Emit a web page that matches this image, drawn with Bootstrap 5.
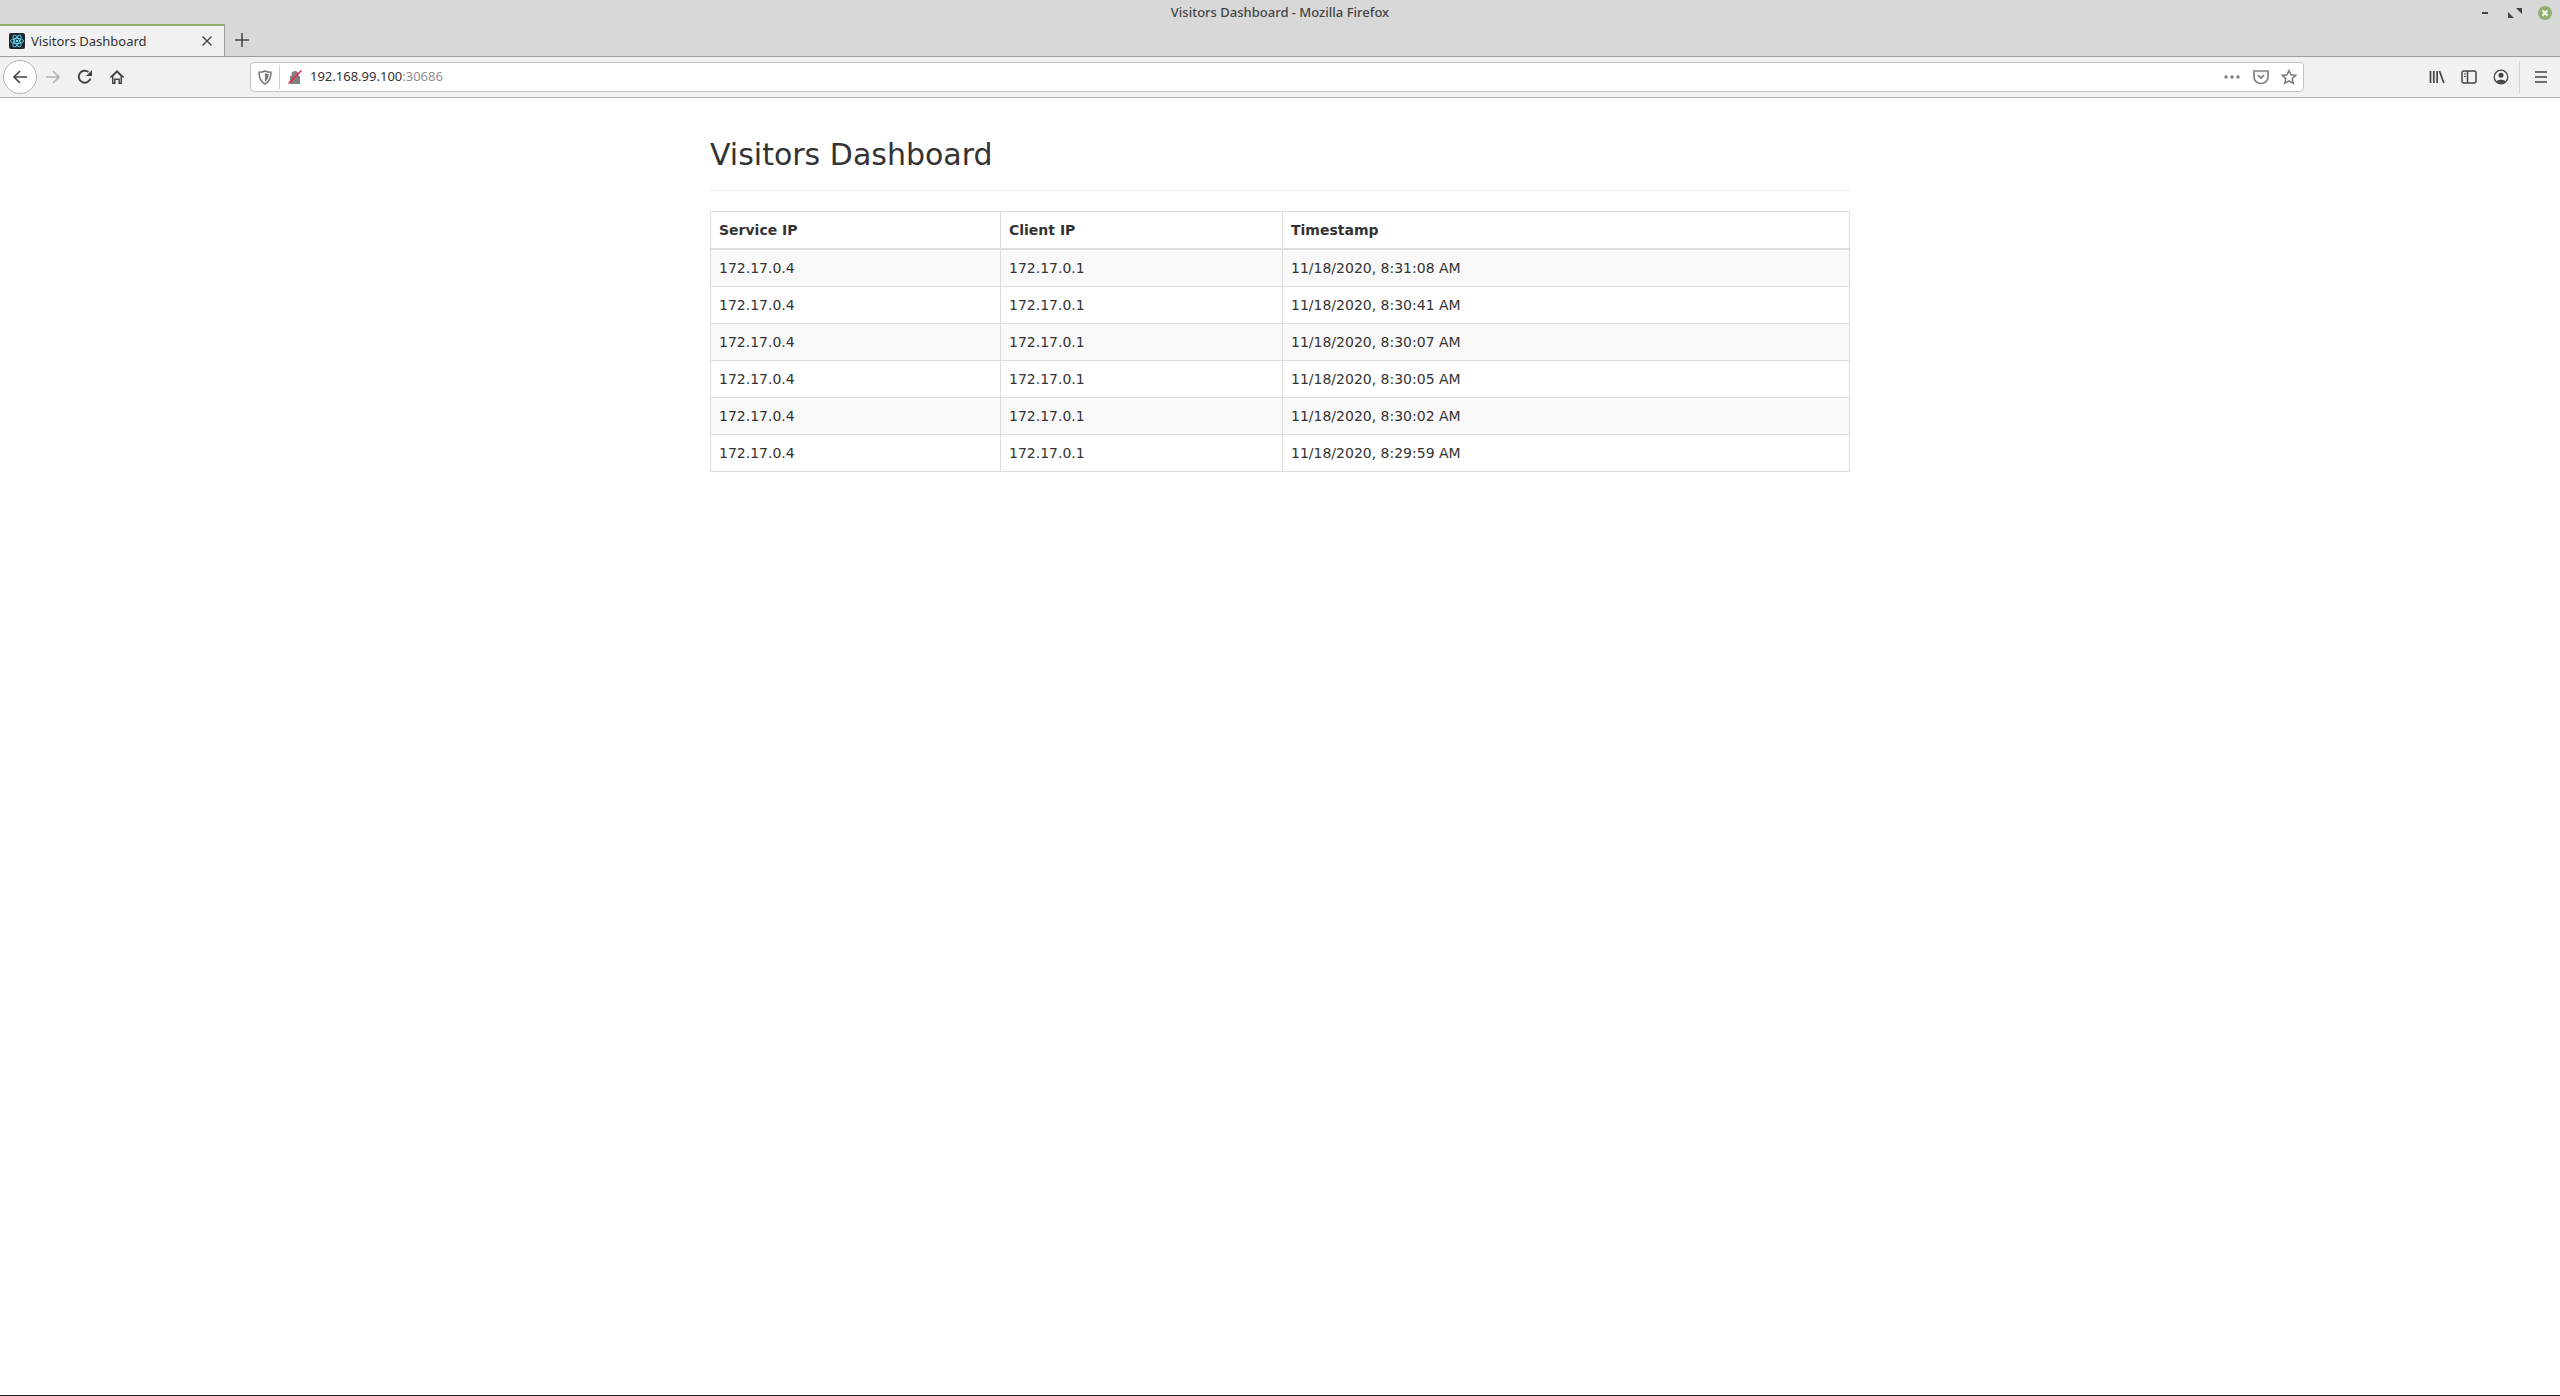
<!DOCTYPE html>
<html lang="en">
<head>
    <meta charset="UTF-8">
    <meta name="viewport" content="width=device-width, initial-scale=1.0">
    <title>Visitors Dashboard</title>
    <link href="https://cdn.jsdelivr.net/npm/bootstrap@5.3.0/dist/css/bootstrap.min.css" rel="stylesheet">
    <style>
        html, body { height: 100%; }
        body { font-family: "DejaVu Sans", sans-serif; font-size: 14px; color: #333; background: #fff; }

        /* browser window */
        .win-top { background: #d8d8d8; height: 57px; border-bottom: 1px solid #9d9d9d; flex: none; }
        .win-title-row { height: 24px; padding-top: 2px; display: grid; grid-template-columns: 1fr auto 1fr; align-items: center; }
        .win-title { font-family: "Noto Sans", sans-serif; font-size: 13px; font-weight: 500; color: #444; }
        .win-ctrls { justify-self: end; display: flex; align-items: center; gap: 14px; padding-right: 8px; }
        .win-ctrls svg { display: block; }
        .tab-row { height: 32px; display: flex; align-items: flex-start; }
        .tab-active { width: 225px; height: 32px; background: #f1f1f1; border-top: 2px solid #8fb06f; border-right: 1px solid #9d9d9d; display: flex; align-items: center; padding: 0 11px 0 9px; gap: 6px; }
        .tab-label { font-family: "Noto Sans", sans-serif; font-size: 13px; color: #333; flex-grow: 1; white-space: nowrap; padding-top: 1px; }
        .tab-plus { width: 33px; height: 32px; display: flex; align-items: center; justify-content: center; }
        .tool-row { background: #f1f1f1; height: 41px; border-bottom: 1px solid #b6b6b6; flex: none; display: flex; align-items: center; padding: 0 3px; }
        .back-btn { width: 34px; height: 34px; border-radius: 50%; background: #fff; border: 1px solid #b3b3b3; display: flex; align-items: center; justify-content: center; flex: none; }
        .tool-btn { width: 32px; height: 32px; display: flex; align-items: center; justify-content: center; flex: none; }
        .url-bar { flex-grow: 1; height: 30px; background: #fff; border: 1px solid #c4c4c4; border-radius: 4px; margin-left: 117px; margin-right: 117px; display: flex; align-items: center; }
        .url-seg { width: 29px; height: 24px; border-right: 1px solid #d0d0d0; display: flex; align-items: center; justify-content: center; flex: none; }
        .url-text { font-family: "Noto Sans", sans-serif; font-size: 13px; color: #333; flex-grow: 1; }
        .url-text span { color: #8f8f8f; }
        .url-actions { display: flex; align-items: center; gap: 12px; padding-right: 6px; }
        .tool-sep { width: 1px; height: 32px; background: #d4d4d4; margin: 0 5px 0 2px; }

        /* page */
        .page-wrap { flex-grow: 1; background: #fff; }
        .page-box { width: 1170px; margin: 0 auto; padding: 0 15px; }
        .page-head { margin: 40px 0 20px; padding-bottom: 19px; border-bottom: 1px solid #eee; }
        .page-head h1 { font-family: "DejaVu Sans", sans-serif; font-size: 30px; font-weight: 400; line-height: 1.1; color: #333; margin: 0; }
        .visits-table { margin: 0; border-color: #ddd; color: #333; font-size: 14px; --bs-table-striped-bg: #f9f9f9; --bs-table-striped-color: #333; --bs-table-color: #333; }
        .visits-table th, .visits-table td { padding: 8px; line-height: 20px; border: 1px solid #ddd; }
        .visits-table thead th { border-bottom: 2px solid #ddd; font-weight: 700; }
        .visits-table th:nth-child(1) { width: 290px; }
        .visits-table th:nth-child(2) { width: 282px; }
        .screen-edge { height: 1px; background: #222; flex: none; }
    </style>
</head>
<body class="d-flex flex-column">
    <div class="win-top">
        <div class="win-title-row">
            <div></div>
            <div class="win-title">Visitors Dashboard - Mozilla Firefox</div>
            <div class="win-ctrls">
                <svg width="16" height="16" viewBox="0 0 16 16"><rect x="4" y="7" width="6" height="2" fill="#444"/></svg>
                <svg width="16" height="16" viewBox="0 0 16 16"><path d="M8 3h6v6zM6 13H0V7z" fill="#444"/></svg>
                <svg width="14" height="14" viewBox="0 0 14 14"><circle cx="7" cy="7" r="7" fill="#8fb06f"/><path d="M4.5 4.5l5 5M9.5 4.5l-5 5" stroke="#fff" stroke-width="1.8"/></svg>
            </div>
        </div>
        <div class="tab-row">
            <div class="tab-active">
                <svg width="16" height="16" viewBox="0 0 16 16"><rect width="16" height="16" rx="2" fill="#20252b"/><g fill="none" stroke="#61dafb" stroke-width=".9"><ellipse cx="8" cy="8" rx="6.5" ry="2.6"/><ellipse cx="8" cy="8" rx="6.5" ry="2.6" transform="rotate(60 8 8)"/><ellipse cx="8" cy="8" rx="6.5" ry="2.6" transform="rotate(120 8 8)"/></g><circle cx="8" cy="8" r="1.3" fill="#61dafb"/></svg>
                <span class="tab-label">Visitors Dashboard</span>
                <svg width="12" height="12" viewBox="0 0 12 12"><path d="M1.5 1.5l9 9M10.5 1.5l-9 9" stroke="#444" stroke-width="1.4"/></svg>
            </div>
            <div class="tab-plus">
                <svg width="14" height="14" viewBox="0 0 14 14"><path d="M7 0v14M0 7h14" stroke="#444" stroke-width="1.5"/></svg>
            </div>
        </div>
    </div>

    <div class="tool-row">
        <div class="back-btn">
            <svg width="16" height="16" viewBox="0 0 16 16"><path d="M15 8H2M8 2L2 8l6 6" fill="none" stroke="#444" stroke-width="1.6"/></svg>
        </div>
        <div class="tool-btn">
            <svg width="16" height="16" viewBox="0 0 16 16"><path d="M1 8h13M8 2l6 6-6 6" fill="none" stroke="#b0b0b0" stroke-width="1.6"/></svg>
        </div>
        <div class="tool-btn">
            <svg width="16" height="16" viewBox="0 0 16 16"><path d="M13.5 9.5A6 6 0 1 1 11.5 3" fill="none" stroke="#444" stroke-width="1.9"/><path d="M15 1v6H9z" fill="#444"/></svg>
        </div>
        <div class="tool-btn">
            <svg width="16" height="16" viewBox="0 0 16 16"><path d="M8 1L0.8 8l1 1L3 8v7h3.6v-4h2.8v4H13V8l1.2 1 1-1zM4.500 7.200L8 3.800l3.500 3.400v6.300h-.6v-4H5.100v4h-.6z" fill="#444"/></svg>
        </div>
        <div class="url-bar">
            <div class="url-seg">
                <svg width="14" height="15" viewBox="0 0 14 15"><path d="M7 1c2 1 4 1.300 6 1.300C13 8 11 12 7 14 3 12 1 8 1 2.300 3 2.300 5 2 7 1z" fill="none" stroke="#777" stroke-width="1.500"/><path d="M7 3v9c2-1.500 3.500-4 3.800-8C9.300 4 8 3.500 7 3z" fill="#777"/></svg>
            </div>
            <svg class="ms-2" width="14" height="14" viewBox="0 0 14 14"><path d="M2 6h1.500V4.500a3.500 3.500 0 0 1 7 0V6H12v8H2z" fill="#808080"/><path d="M0.500 13.500L13.500 0.500" stroke="#f01c45" stroke-width="1.500"/></svg>
            <div class="url-text ms-2">192.168.99.100<span>:30686</span></div>
            <div class="url-actions">
                <svg width="18" height="16" viewBox="0 0 18 16"><circle cx="3" cy="8" r="1.700" fill="#808080"/><circle cx="9" cy="8" r="1.700" fill="#808080"/><circle cx="15" cy="8" r="1.700" fill="#808080"/></svg>
                <svg width="16" height="16" viewBox="0 0 16 16"><path d="M1 2h14v6a7 6.500 0 0 1-14 0z" fill="none" stroke="#808080" stroke-width="1.700"/><path d="M4.800 6.200L8 9l3.200-2.800" fill="none" stroke="#808080" stroke-width="1.700"/></svg>
                <svg width="16" height="16" viewBox="0 0 16 16"><path d="M8 1.500l2 4.300 4.700.6-3.400 3.200.9 4.700L8 12l-4.200 2.300.9-4.700L1.300 6.400 6 5.800z" fill="none" stroke="#808080" stroke-width="1.600"/></svg>
            </div>
        </div>
        <div class="tool-btn">
            <svg width="16" height="16" viewBox="0 0 16 16"><path d="M1.500 2v12M4.800 2v12M8.100 2v12M10.500 2l4.300 12" stroke="#444" stroke-width="1.700" fill="none"/></svg>
        </div>
        <div class="tool-btn">
            <svg width="16" height="16" viewBox="0 0 16 16"><rect x="1" y="2" width="14" height="12" rx="2" fill="none" stroke="#444" stroke-width="1.500"/><path d="M6.500 2v12" stroke="#444" stroke-width="1.500"/><path d="M3 5h2M3 7.500h2" stroke="#444"/></svg>
        </div>
        <div class="tool-btn">
            <svg width="16" height="16" viewBox="0 0 16 16"><circle cx="8" cy="8" r="6.800" fill="none" stroke="#444" stroke-width="1.300"/><circle cx="8" cy="6.300" r="2.500" fill="#444"/><path d="M3.500 12.500c1-2.500 8-2.500 9 0C11 14.500 5 14.500 3.500 12.500z" fill="#444"/></svg>
        </div>
        <div class="tool-sep"></div>
        <div class="tool-btn">
            <svg width="16" height="16" viewBox="0 0 16 16"><path d="M2 3h12M2 8h12M2 13h12" stroke="#444" stroke-width="1.500"/></svg>
        </div>
    </div>

    <div class="page-wrap">
        <div class="page-box">
            <div class="page-head">
                <h1>Visitors Dashboard</h1>
            </div>
            <table class="table table-bordered table-striped visits-table">
                <thead>
                    <tr><th>Service IP</th><th>Client IP</th><th>Timestamp</th></tr>
                </thead>
                <tbody>
                    <tr><td>172.17.0.4</td><td>172.17.0.1</td><td>11/18/2020, 8:31:08 AM</td></tr>
                    <tr><td>172.17.0.4</td><td>172.17.0.1</td><td>11/18/2020, 8:30:41 AM</td></tr>
                    <tr><td>172.17.0.4</td><td>172.17.0.1</td><td>11/18/2020, 8:30:07 AM</td></tr>
                    <tr><td>172.17.0.4</td><td>172.17.0.1</td><td>11/18/2020, 8:30:05 AM</td></tr>
                    <tr><td>172.17.0.4</td><td>172.17.0.1</td><td>11/18/2020, 8:30:02 AM</td></tr>
                    <tr><td>172.17.0.4</td><td>172.17.0.1</td><td>11/18/2020, 8:29:59 AM</td></tr>
                </tbody>
            </table>
        </div>
    </div>
    <div class="screen-edge"></div>

    <script src="https://cdn.jsdelivr.net/npm/bootstrap@5.3.0/dist/js/bootstrap.bundle.min.js"></script>
</body>
</html>
